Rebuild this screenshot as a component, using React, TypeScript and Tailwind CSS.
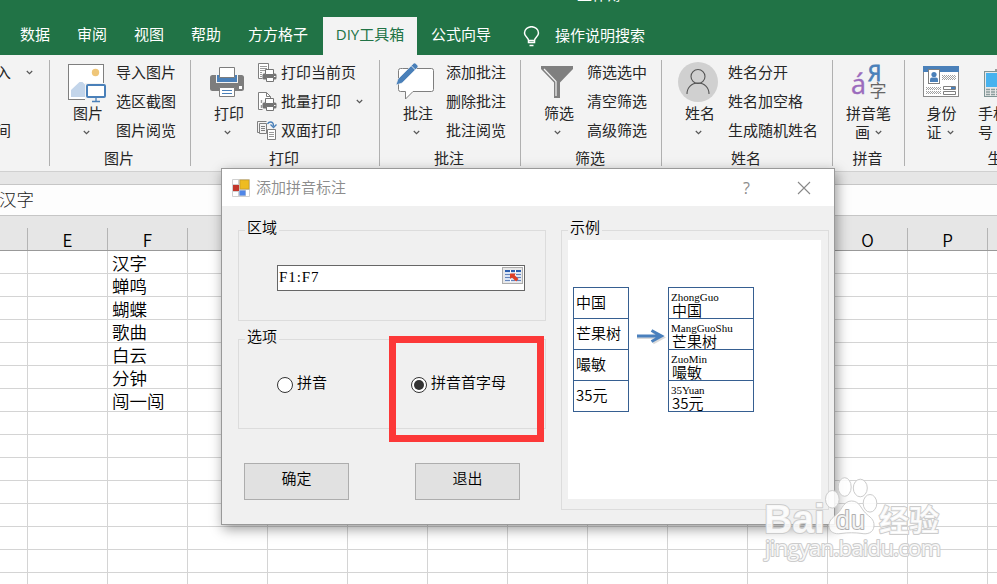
import type { ReactNode } from "react";

const UI_FONT = "font-['Open_Sans','Noto_Sans_CJK_SC',sans-serif]";
const FORM_FONT = "font-['Noto_Sans_CJK_SC',sans-serif]";

function Chevron() {
	return (
		<svg width="7" height="5" viewBox="0 0 7 5" fill="none" stroke="#555" strokeWidth="1.2">
			<path d="M.8 1l2.7 2.6L6.2 1" />
		</svg>
	);
}

/* ---------- ribbon icons ---------- */

function PictureIcon() {
	return (
		<svg width="40" height="42" viewBox="0 0 40 42">
			<rect x=".5" y="3.5" width="35" height="35" fill="#fff" stroke="#7f7f7f" />
			<circle cx="27.500" cy="11.500" r="3.700" fill="#efc679" />
			<path d="M3 36v-7l8.500-8h3l8 8v7z" fill="#c3d5ea" />
			<path d="M17 22h21v19H17z" fill="#f3f3f3" />
			<rect x="19" y="24" width="18" height="12" rx="1" fill="#fff" stroke="#4a80b9" strokeWidth="2" />
			<path d="M28 37v3M24 40.500h8" stroke="#4a80b9" strokeWidth="1.3" />
		</svg>
	);
}

function PrinterIcon() {
	return (
		<svg width="38" height="31" viewBox="0 0 38 31" className="translate-y-px">
			<rect y="8" width="34" height="16" rx="2.500" fill="#7d7d7d" />
			<path d="M6 8h22v8H6z" fill="#f3f3f3" />
			<path d="M7 8h20v7H7z" fill="#4a80b9" />
			<path d="M9.500.5h15v10h-15zM9.500 20.500h15v9h-15z" fill="#fff" stroke="#7d7d7d" />
			<path d="M12 23.500h10M12 26.500h10" stroke="#4a80b9" />
			<rect x="29" y="19" width="3" height="3" fill="#fff" />
		</svg>
	);
}

function CommentIcon() {
	return (
		<svg width="44" height="40" viewBox="0 0 44 40">
			<path
				d="M6.500 6.500h29q2 0 2 2v19q0 2-2 2H17l-7.500 7.500v-7.500H4.500q-2 0-2-2v-19q0-2 2-2z"
				fill="#fff"
				stroke="#7f7f7f"
			/>
			<path d="M0 23l2-6L17.500 1.500q1-1 2.200 0l1.800 1.800q1 1 0 2.200L6 21z" fill="#4a80b9" stroke="#f3f3f3" strokeWidth=".6" />
			<path d="M15.500 4l4 4" stroke="#f3f3f3" strokeWidth=".9" />
		</svg>
	);
}

function FunnelIcon() {
	return (
		<svg width="36" height="33" viewBox="0 0 36 33" className="translate-y-px">
			<path d="M0 0h32v3L19 16.500V32h-6V16.500L0 3z" fill="#7f7f7f" />
			<path d="M3 3l12 12.500V30" fill="none" stroke="#f3f3f3" strokeWidth="1.200" />
		</svg>
	);
}

function PersonIcon() {
	return (
		<svg width="44" height="41" viewBox="0 0 44 41">
			<circle cx="20" cy="21" r="20" fill="#d0d0d0" />
			<g fill="none" stroke="#555" strokeWidth="1.100">
				<circle cx="20" cy="15.500" r="7" />
				<path d="M9 33c0-6.500 4.500-11 11-11s11 4.500 11 11" />
			</g>
		</svg>
	);
}

function PinyinIcon() {
	return (
		<svg width="36" height="38" viewBox="0 0 36 38" className="overflow-visible">
			<text x="0" y="31" fontSize="27" fill="#9b6bbd" stroke="#9b6bbd" strokeWidth=".4" fontFamily="Open Sans">
				á
			</text>
			<text x="17" y="17.500" fontSize="21" fill="#4a80b9" stroke="#4a80b9" strokeWidth=".8" fontFamily="Open Sans">
				Я
			</text>
			<text x="18.500" y="33.500" fontSize="17" fill="#666" fontFamily="Noto Sans CJK SC">
				字
			</text>
		</svg>
	);
}

function IdCardIcon() {
	return (
		<svg width="37" height="31" viewBox="0 0 37 31">
			<rect x=".5" y=".5" width="35" height="30" fill="#fff" stroke="#8a8a8a" />
			<path d="M0 0h36v6H0z" fill="#4a80b9" />
			<rect x="5.500" y="3.500" width="11" height="14" fill="#fff" stroke="#7f7f7f" />
			<circle cx="11" cy="8.500" r="2.600" fill="#4a80b9" />
			<path d="M7 16v-2.500q0-2 2-2h4q2 0 2 2V16z" fill="#4a80b9" />
			<path
				d="M19 9.500h14M20 10.500h13M19 11.500h14M20 12.500h13M19 13.500h14M3 21.500h15M4 22.500h14M3 23.500h15M3 25.500h15M4 26.500h14M3 27.500h15"
				stroke="#a0a0a0"
				strokeDasharray="1 1"
			/>
			<path d="M20.500 20.500h12v3h-12zM20.500 25.500h12v3h-12z" fill="#fff" stroke="#7f7f7f" />
			<path d="M28 21h4v2h-4z" fill="#4a80b9" />
		</svg>
	);
}

function PhoneIcon() {
	return (
		<svg width="30" height="30" viewBox="0 0 30 30" className="shrink-0 translate-y-[2px]">
			<path d="M12 0v2.500" stroke="#7f7f7f" strokeWidth="1.500" />
			<rect x=".5" y="2.500" width="28" height="25" fill="#e8e8e8" stroke="#7f9494" />
			<path d="M2 4h25v14H2z" fill="#47b2ee" />
			<path d="M2 20.500h25M2 23h25M2 25.500h25" stroke="#8a9c9c" strokeWidth="1.600" strokeDasharray="4 1" />
		</svg>
	);
}

function MiniPrinter() {
	return (
		<g>
			<path d="M5.500 8.500h14v11h-14z" fill="#f3f3f3" />
			<rect x="5.500" y="10.500" width="14" height="6" rx="1.500" fill="#747474" />
			<path d="M8.500 6.500h8v5h-8zM9.500 14.500h7v4h-7z" fill="#fff" stroke="#747474" />
			<path d="M17 13.500h1.500" stroke="#fff" />
		</g>
	);
}

function PrintPageIcon() {
	return (
		<svg width="20" height="20" viewBox="0 0 20 20">
			<path d="M1.500.5h10v15h-10z" fill="#fff" stroke="#7f7f7f" />
			<path d="M3 3.500h7M3 5.500h7M3 7.500h5M3 9.500h2M3 11.500h2M3 13.500h2" stroke="#9a9a9a" />
			<MiniPrinter />
		</svg>
	);
}

function BatchPrintIcon() {
	return (
		<svg width="20" height="20" viewBox="0 0 20 20">
			<path d="M1.500.5h8l4 4v13h-12z" fill="#fff" stroke="#7f7f7f" />
			<path d="M9.500.5v4h4" fill="none" stroke="#7f7f7f" />
			<path d="M4.500 8v3M4.500 13v3" stroke="#9a9a9a" strokeWidth="1.500" />
			<MiniPrinter />
		</svg>
	);
}

function DuplexIcon() {
	return (
		<svg width="20" height="20" viewBox="0 0 20 20">
			<path d="M9.500.5h-9v11h2M2.500 2.500h7v10h-7zM4 5.500h4M4 7.500h4M4 9.500h4" fill="none" stroke="#7f7f7f" />
			<path d="M10.500 8.500h8v10h-8z" fill="#fff" stroke="#7f7f7f" />
			<path d="M12 11.500h5M12 13.500h5M12 15.500h5" stroke="#9a9a9a" />
			<path d="M10.500 3q1-2 3-2 3 0 3 4M13.500 3.500l3 3 3-3" fill="none" stroke="#4a80b9" strokeWidth="1.300" />
		</svg>
	);
}

/* ---------- ribbon ---------- */

interface RibbonItem {
	label: string;
	icon?: ReactNode;
	menu?: boolean;
}

interface RibbonGroupProps {
	title: string;
	icon: ReactNode;
	items: RibbonItem[];
	className: string;
}

function GroupFrame({ title, className, children }: { title: string; className: string; children: ReactNode }) {
	return (
		<div className={`flex h-[116px] shrink-0 pt-[5px] ${className}`}>
			<div className="flex min-w-0 flex-1 flex-col">
				<div className="flex h-[87px] shrink-0">{children}</div>
				<div className="flex h-[22px] items-center justify-center whitespace-nowrap pr-[2px]">{title}</div>
			</div>
			<div className="h-[106px] w-px bg-[#b0b0b0]" />
		</div>
	);
}

function RibbonGroup({ title, icon, items, className }: RibbonGroupProps) {
	return (
		<GroupFrame title={title} className={className}>
			<div className="flex w-[66px] shrink-0 flex-col items-center pl-[10px]">
				<div className="flex h-[43px] w-full items-center justify-center">{icon}</div>
				<span className="h-5 leading-5">{title}</span>
				<div className="flex h-[18px] items-center pr-1">
					<Chevron />
				</div>
			</div>
			<div className="flex flex-col">
				{items.map((item) => (
					<div key={item.label} className="flex h-[29px] shrink-0 items-center whitespace-nowrap pb-1">
						{item.icon && <span className="mr-1 w-5">{item.icon}</span>}
						<span>{item.label}</span>
						{item.menu && (
							<span className="ml-[15px]">
								<Chevron />
							</span>
						)}
					</div>
				))}
			</div>
		</GroupFrame>
	);
}

function Ribbon() {
	return (
		<div className="flex h-[117px] w-full overflow-hidden border-b border-[#d0d0d0] bg-[#f3f3f3] text-[15px] text-[#262626]">
			<GroupFrame title="" className="w-[50px]">
				<div className="-ml-1 flex flex-col">
					<div className="flex h-[58px] items-start gap-[15px] leading-[25px]">
						<span>入</span>
						<span className="flex h-[25px] items-center">
							<Chevron />
						</span>
					</div>
					<span className="leading-[25px]">间</span>
				</div>
			</GroupFrame>
			<RibbonGroup
				title="图片"
				className="w-[141px]"
				icon={<PictureIcon />}
				items={[{ label: "导入图片" }, { label: "选区截图" }, { label: "图片阅览" }]}
			/>
			<RibbonGroup
				title="打印"
				className="w-[189px]"
				icon={<PrinterIcon />}
				items={[
					{ label: "打印当前页", icon: <PrintPageIcon /> },
					{ label: "批量打印", icon: <BatchPrintIcon />, menu: true },
					{ label: "双面打印", icon: <DuplexIcon /> },
				]}
			/>
			<RibbonGroup
				title="批注"
				className="w-[141px]"
				icon={<CommentIcon />}
				items={[{ label: "添加批注" }, { label: "删除批注" }, { label: "批注阅览" }]}
			/>
			<RibbonGroup
				title="筛选"
				className="w-[141px]"
				icon={<FunnelIcon />}
				items={[{ label: "筛选选中" }, { label: "清空筛选" }, { label: "高级筛选" }]}
			/>
			<RibbonGroup
				title="姓名"
				className="w-[171px]"
				icon={<PersonIcon />}
				items={[{ label: "姓名分开" }, { label: "姓名加空格" }, { label: "生成随机姓名" }]}
			/>
			<GroupFrame title="拼音" className="w-[72px]">
				<div className="flex w-full flex-col items-center">
					<div className="flex h-[43px] items-center">
						<PinyinIcon />
					</div>
					<span className="h-5 leading-5">拼音笔</span>
					<span className="flex h-[18px] items-center gap-[5px] leading-[18px]">
						画 <Chevron />
					</span>
				</div>
			</GroupFrame>
			<GroupFrame title="生成数据" className="w-[228px]">
				<div className="flex w-[73px] shrink-0 flex-col items-center">
					<div className="flex h-[43px] items-center">
						<IdCardIcon />
					</div>
					<span className="h-5 leading-5">身份</span>
					<span className="flex h-[18px] items-center gap-[5px] pr-[3px] leading-[18px]">
						证 <Chevron />
					</span>
				</div>
				<div className="flex flex-col items-start">
					<div className="flex h-[43px] items-center pl-[6px]">
						<PhoneIcon />
					</div>
					<span className="h-5 leading-5">手机</span>
					<span className="h-[18px] leading-[18px]">号</span>
				</div>
			</GroupFrame>
		</div>
	);
}

function TabBar() {
	const tabs = ["数据", "审阅", "视图", "帮助", "方方格子"];

	return (
		<div className="flex h-[55px] flex-col overflow-hidden bg-[#217346] text-[15px] text-white">
			<div className="h-[17px] overflow-hidden pl-[577px]">
				<span className="-mt-[14px] block leading-4">工作簿</span>
			</div>
			<div className="flex h-[38px] items-center whitespace-nowrap">
				<div className="flex w-[323px] gap-[27px] pb-1 pl-5">
					{tabs.map((tab) => (
						<span key={tab}>{tab}</span>
					))}
				</div>
				<div className="flex h-full w-[94px] items-center justify-center bg-[#f3f3f3] pb-1 text-[#217346]">
					DIY工具箱
				</div>
				<span className="ml-[14px] pb-1">公式向导</span>
				<svg
					width="17"
					height="21"
					viewBox="0 0 17 21"
					className="ml-8 mr-[15px]"
					fill="none"
					stroke="#fff"
					strokeWidth="1.500"
				>
					<path d="M5.500 14.500c0-3-4-3.500-4-7.500a7 6.300 0 0 1 14 0c0 4-4 4.500-4 7.500v2h-6zM5.500 14.500h6M6.500 19.500h4" />
				</svg>
				<span className="pb-[2px]">操作说明搜索</span>
			</div>
		</div>
	);
}

/* ---------- worksheet ---------- */

const COLUMNS = ["E", "F", "G", "H", "I", "J", "K", "L", "M", "N", "O", "P", "Q"];
const VALUES = ["汉字", "蝉鸣", "蝴蝶", "歌曲", "白云", "分钟", "闯一闯"];

function Sheet() {
	return (
		<div className="w-full overflow-hidden">
			<div className="h-3 bg-[#e6e6e6]" />
			<div className="flex h-8 items-center overflow-hidden border-y border-[#c6c6c6] bg-[#fdfdfd] text-[17.500px] font-light text-[#222]">
				<span className="-ml-px pb-[2px]">汉字</span>
			</div>
			<div className="flex h-[35px] items-end overflow-hidden border-b border-[#999] bg-[#e6e6e6] text-black">
				<div className="h-[22px] w-7 shrink-0 border-r border-[#b4b4b4]" />
				{COLUMNS.map((name) => (
					<div key={name} className="flex h-[22px] w-20 shrink-0 items-center justify-center border-r border-[#b4b4b4]">
						<span className="pt-[2px] font-['Noto_Sans_CJK_SC',sans-serif] text-[17px] font-[350] leading-5">{name}</span>
					</div>
				))}
			</div>
			{Array.from({ length: 15 }, (_, row) => (
				<div key={row} className="flex h-[23px] border-b border-[#d4d4d4] bg-white">
					<div className="w-7 shrink-0 border-r border-[#d4d4d4]" />
					{COLUMNS.map((name) => (
						<div
							key={name}
							className="w-20 shrink-0 whitespace-nowrap border-r border-[#d4d4d4] pl-1 pt-px text-[17.500px] font-[350] leading-[23px] text-black"
						>
							{name === "F" ? VALUES[row] : null}
						</div>
					))}
				</div>
			))}
		</div>
	);
}

/* ---------- dialog ---------- */

interface GroupBoxProps {
	legend: string;
	className: string;
	children: ReactNode;
}

function GroupBox({ legend, className, children }: GroupBoxProps) {
	return (
		<div className={`flex flex-col border border-[#dcdcdc] ${className}`}>
			<div className="-mt-[14px] mb-[2px] ml-[6px] flex h-5 w-[34px] shrink-0 items-center justify-center whitespace-nowrap bg-[#f0f0f0] leading-5">
				{legend}
			</div>
			{children}
		</div>
	);
}

function Radio({ label, checked, className }: { label: string; checked?: boolean; className: string }) {
	return (
		<div className={`flex items-start gap-1 whitespace-nowrap ${className}`}>
			<span className="mt-[5px] flex size-4 shrink-0 items-center justify-center rounded-full border border-[#333] bg-white">
				{checked && <span className="size-[10px] rounded-full bg-[#333]" />}
			</span>
			<span className="leading-5">{label}</span>
		</div>
	);
}

const EXAMPLES = [
	{ text: "中国", pinyin: "ZhongGuo" },
	{ text: "芒果树", pinyin: "MangGuoShu" },
	{ text: "嘬敏", pinyin: "ZuoMin" },
	{ text: "35元", pinyin: "35Yuan" },
];

function ExamplePanel() {
	return (
		<div className="ml-[6px] mt-px flex h-[259px] w-[253px] items-start bg-white pl-[5px] pt-[47px]">
			<div className="w-14 border border-b-0 border-[#365f91]">
				{EXAMPLES.map(({ text }) => (
					<div key={text} className="flex h-[31px] items-center border-b border-[#365f91] pb-[2px] pl-[2px]">
						{text}
					</div>
				))}
			</div>
			<svg width="30" height="18" viewBox="0 0 30 18" className="ml-[7px] mr-[2px] mt-10" fill="none">
				<path d="M1 10.500h26M17 5l10 5.500-10 5.500" stroke="#00000025" strokeWidth="3" />
				<path d="M1 9h24M15.500 3.500l10 5.500-10 5.500" stroke="#4a80bd" strokeWidth="3" />
			</svg>
			<div className="w-[86px] border border-b-0 border-[#365f91]">
				{EXAMPLES.map(({ text, pinyin }) => (
					<div key={text} className="h-[31px] border-b border-[#365f91] pl-[2px]">
						<div className="h-[14px] font-['Liberation_Serif',serif] text-[11px] font-normal leading-[18px]">{pinyin}</div>
						<div className="h-4 pl-px leading-4">{text}</div>
					</div>
				))}
			</div>
		</div>
	);
}

function Dialog() {
	return (
		<div
			className={`absolute left-[221px] top-[168px] h-[357px] w-[614px] border border-[#999] bg-[#f0f0f0] text-[15px] font-[350] text-black shadow-[2px_4px_12px_rgba(0,0,0,0.4)] ${FORM_FONT}`}
		>
			<div className="flex h-[37px] items-center bg-white pl-[10px] text-[#8c8c8c]">
				<svg width="18" height="18" viewBox="0 0 18 18">
					<rect width="18" height="18" rx="1" fill="#d0d0d0" />
					<path d="M1 1h5v4H1zM1 13h5v4H1zM14 11h3v6h-3z" fill="#fff" />
					<rect x="1" y="6" width="6" height="6" fill="#c3372b" />
					<rect x="8" y="1" width="9" height="9" fill="#eebc20" stroke="#c69a27" strokeWidth=".7" />
					<rect x="7.500" y="11.500" width="6" height="5" fill="#4f86e8" />
				</svg>
				<span className="ml-[6px]">添加拼音标注</span>
				<span className="ml-auto mr-[47px] font-['Open_Sans',sans-serif] text-[16px] font-normal">?</span>
				<svg width="14" height="14" viewBox="0 0 14 14" className="mr-[23px]" stroke="#888" strokeWidth="1.100">
					<path d="M1 1l12 12M13 1L1 13" />
				</svg>
			</div>
			<div className="flex pl-4 pt-6">
				<div className="w-[308px]">
					<GroupBox legend="区域" className="h-[91px]">
						<div className="ml-[38px] mt-[26px] flex h-[26px] w-[248px] justify-between border border-[#666] bg-white pl-px">
							<span className="font-['Liberation_Serif',serif] text-[15px] font-normal leading-[22px] tracking-[0.900px]">
								F1:F7
							</span>
							<span className="mr-px mt-px flex h-[17px] w-[21px] items-center justify-center border border-[#adadad] bg-[#e8e8e8]">
								<svg width="16" height="12" viewBox="0 0 16 12">
									<path d="M0 0h16v12H0z" fill="#dbe5f5" />
									<path d="M0 1h16" stroke="#2d5fae" strokeWidth="2" />
									<path d="M0 4.500h16M0 7.500h16M0 10.500h16" stroke="#6484bb" />
									<path d="M5.500 0v12M10.500 0v12" stroke="#fff" />
									<path d="M5 3.500h6L9.500 5l4 4-2.500 2.500-4-4L5 9z" fill="#df3e25" />
								</svg>
							</span>
						</div>
					</GroupBox>
					<GroupBox legend="选项" className="mt-[18px] h-[90px]">
						<div className="mt-6 flex">
							<Radio label="拼音" className="ml-[38px] w-[134px]" />
							<Radio label="拼音首字母" checked className="" />
						</div>
					</GroupBox>
					<div className="mt-[34px] flex gap-[66px] pl-[6px]">
						<button type="button" className="h-[37px] w-[105px] border border-[#adadad] bg-[#e1e1e1] pb-[6px]">
							确定
						</button>
						<button type="button" className="h-[37px] w-[105px] border border-[#adadad] bg-[#e1e1e1] pb-[6px]">
							退出
						</button>
					</div>
				</div>
				<GroupBox legend="示例" className="ml-[15px] h-[280px] w-[268px]">
					<ExamplePanel />
				</GroupBox>
			</div>
		</div>
	);
}

function Watermark() {
	return (
		<svg width="190" height="95" viewBox="0 0 190 95" className="absolute left-[760px] top-[472px]">
			<g fill="#fff" fillOpacity=".85" stroke="#ccc" strokeWidth="2" strokeLinejoin="round" paintOrder="stroke">
				<text x="4" y="60.500" fontSize="41" fontWeight="700" fontFamily="Liberation Sans" textLength="61" lengthAdjust="spacingAndGlyphs">
					Bai
				</text>
				<g paintOrder="normal" strokeWidth="1">
					<ellipse cx="72.300" cy="27.300" rx="6.800" ry="8.800" />
					<ellipse cx="84.700" cy="15" rx="6.500" ry="9.300" />
					<ellipse cx="100.300" cy="16" rx="7" ry="8.800" />
					<ellipse cx="110" cy="31.300" rx="6.800" ry="8.800" />
					<path d="M91.500 29c8 0 9 7 14 12 4 4 9 6 8.500 13-.5 7-7 8.500-12 7.500-7-1-14-1-21 0-6 1-12-1-12-8 0-6 5-8.500 9-12.500s6-12 13.500-12z" />
				</g>
				<text x="76" y="57" fontSize="25" fontFamily="Liberation Sans" stroke="#b0b0b0" textLength="29">
					du
				</text>
				<text x="119" y="58.500" fontSize="30" fontWeight="700" fontFamily="Noto Sans CJK SC">
					经验
				</text>
				<text x="5" y="84" fontSize="22" fontFamily="Open Sans" textLength="176">
					jingyan.baidu.com
				</text>
			</g>
		</svg>
	);
}

export default function App() {
	return (
		<div className={`relative h-[584px] w-[997px] overflow-hidden bg-white ${UI_FONT}`}>
			<TabBar />
			<Ribbon />
			<Sheet />
			<Dialog />
			{/* highlight around the selected option */}
			<div className="absolute left-[389px] top-[336px] h-[106px] w-[155px] border-[7px] border-[#fc3838]" />
			<Watermark />
		</div>
	);
}
